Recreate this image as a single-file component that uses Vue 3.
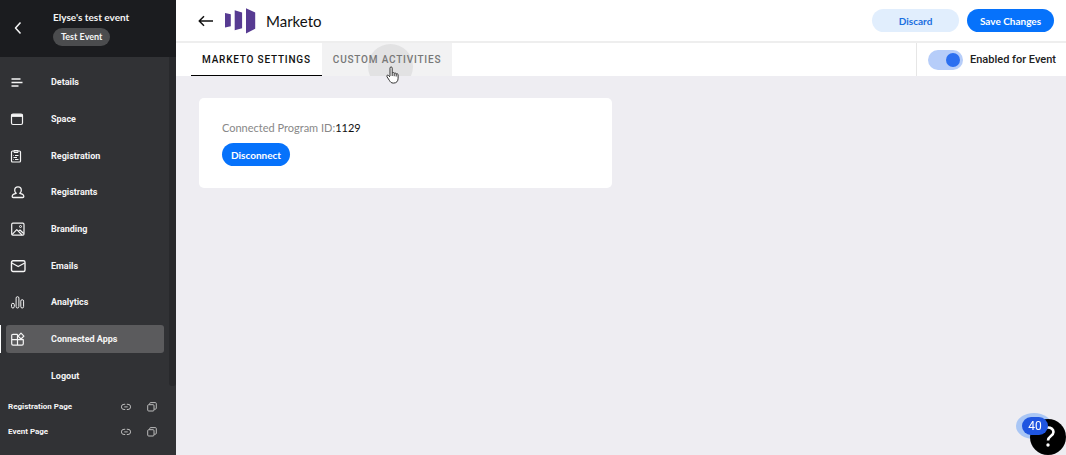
<script setup>
import { ref } from 'vue'

const items = [
  { name: 'Details', icon: 'details' },
  { name: 'Space', icon: 'space' },
  { name: 'Registration', icon: 'registration' },
  { name: 'Registrants', icon: 'registrants' },
  { name: 'Branding', icon: 'branding' },
  { name: 'Emails', icon: 'emails' },
  { name: 'Analytics', icon: 'analytics' },
  { name: 'Connected Apps', icon: 'apps' },
  { name: 'Logout', icon: '' },
]
const pages = ['Registration Page', 'Event Page']
const current = ref('Connected Apps')
const enabled = ref(true)
</script>

<template>
  <div class="layout">
    <aside class="sidebar">
      <header class="event">
        <button class="plain back" type="button" aria-label="Back to events">
          <svg width="8" height="14" viewBox="0 0 8 14"><path d="M6.5 1.5 1.5 7l5 5.5" stroke-width="1.5" /></svg>
        </button>
        <div class="event-info">
          <h2>Elyse's test event</h2>
          <span class="badge">Test Event</span>
        </div>
      </header>
      <div class="menu">
        <nav>
          <a
            v-for="item in items"
            :key="item.name"
            href="#"
            class="nav-item"
            :class="{ active: current === item.name }"
            @click.prevent="current = item.name"
          >
            <svg class="nav-icon" width="16" height="16" viewBox="0 0 16 16" aria-hidden="true">
              <path v-if="item.icon === 'details'" d="M1.500 5h9M1.500 8.500h11M1.500 12h7" stroke-width="1.300" />
              <template v-else-if="item.icon === 'space'">
                <rect x="1.500" y="3" width="11" height="10.500" rx="1.500" stroke-width="1.200" />
                <path d="M1.500 4.500h11" stroke-width="2.800" />
              </template>
              <template v-else-if="item.icon === 'registration'">
                <rect x="1.500" y="3" width="9" height="11" rx="1" stroke-width="1.200" />
                <path d="M4 2.500h4v2H4zM3.500 7.500h.5M5 7.500h3.500M3.500 9.500h3.500M3.500 11.500h.5M5 11.500h3.500" />
              </template>
              <template v-else-if="item.icon === 'registrants'">
                <path d="M4.700 6.200a3.300 3.300 0 0 1 6.600 0c0 1.500-.6 2.600-1.500 3.200 2.300.4 4 1.500 4 3.100 0 .7-.4 1-1 1H3.200c-.7 0-1-.4-1-1 0-1.600 1.700-2.700 4-3.100-.9-.6-1.500-1.700-1.500-3.200Z" stroke-width="1.300" />
              </template>
              <template v-else-if="item.icon === 'branding'">
                <rect x="1.700" y="2.200" width="12.300" height="12" rx="1.200" stroke-width="1.200" />
                <path d="m2 13.700 4.800-5 5.200 5.300M8.500 10.200 10 9l3.700 3.500" stroke-width="1.200" />
                <circle cx="10.500" cy="5.500" r="1" />
              </template>
              <template v-else-if="item.icon === 'emails'">
                <rect x="1.500" y="2.800" width="13.500" height="10.700" rx="1.500" stroke-width="1.400" />
                <path d="m1.800 5 6.400 3.500L14.700 5" stroke-width="1.300" />
              </template>
              <template v-else-if="item.icon === 'analytics'">
                <rect x="1.500" y="9.300" width="2.800" height="4.700" rx="1.400" />
                <rect x="6.100" y="2.700" width="2.800" height="11.300" rx="1.400" />
                <rect x="10.800" y="5.700" width="2.800" height="8.300" rx="1.400" />
              </template>
              <template v-else-if="item.icon === 'apps'">
                <path d="M7.500 3.300H3A1.300 1.300 0 0 0 1.700 4.600v8.200A1.300 1.300 0 0 0 3 14.100h9a1.300 1.300 0 0 0 1.300-1.300V8.700H1.700M7.500 3.300v10.800" stroke-width="1.200" />
                <path d="m11 2.200 2.900 2.900L11 8 8.100 5.100Z" stroke-width="1.200" />
              </template>
            </svg>
            <span>{{ item.name }}</span>
          </a>
        </nav>
        <div class="track"></div>
      </div>
      <ul class="pages">
        <li v-for="page in pages" :key="page">
          <span class="page-name">{{ page }}</span>
          <button class="plain" type="button" :aria-label="`Open ${page}`">
            <svg width="10" height="10" viewBox="0 0 10 10"><path d="M4.200 2.300H3a2.600 2.600 0 0 0 0 5.200h1.200M5.800 2.300H7a2.600 2.600 0 0 1 0 5.200H5.800M3.300 4.900h3.400" /></svg>
          </button>
          <button class="plain" type="button" :aria-label="`Copy ${page} link`">
            <svg width="10" height="10" viewBox="0 0 10 10"><rect x=".7" y="2.700" width="6.300" height="6.300" rx="1" /><path d="M2.700 2.500V1.600a1 1 0 0 1 1-1h4.600a1 1 0 0 1 1 1v4.600a1 1 0 0 1-1 1H7.200" /></svg>
          </button>
        </li>
      </ul>
    </aside>

    <main>
      <header class="topbar">
        <button class="plain return" type="button" aria-label="Back to apps">
          <svg width="16" height="12" viewBox="0 0 16 12"><path d="M15 6H1.300M6 1.200 1.200 6 6 10.800" stroke-width="1.500" /></svg>
        </button>
        <svg class="logo" width="31" height="26" viewBox="0 0 31 26" aria-hidden="true">
          <path d="m0 5 5.800 1.300v12L0 19.600ZM9.700 2.300l7.400 2.200v15.800l-7.400 2ZM21 .3l9.200 4.200v16.300L21 25.500Z" />
        </svg>
        <h1>Marketo</h1>
        <button class="pill soft" type="button">Discard</button>
        <button class="pill" type="button">Save Changes</button>
      </header>

      <div class="subbar">
        <div class="tabs" role="tablist">
          <button class="tab selected" type="button" role="tab" aria-selected="true">MARKETO SETTINGS</button>
          <button class="tab hovered" type="button" role="tab" aria-selected="false">
            <span class="ripple"></span>
            <span class="tab-label">CUSTOM ACTIVITIES</span>
          </button>
          <svg class="pointer" width="13" height="18" viewBox="0 0 13 18" aria-hidden="true">
            <path d="M4 10V2.200c0-1.800 2.200-1.800 2.200 0V7c.5-.8 1.900-.6 2 .4.600-.7 1.900-.4 2 .6.900-.6 1.900-.2 1.900.9v3.300c0 3-1.500 4.900-4.700 4.900-2.300 0-3.200-1.300-4.100-2.800L1 10.800C.3 9.500 1.600 8.500 2.600 9.500L4 11M6.200 7v3M8.200 7.500v2.700M10.200 8v2.500" />
          </svg>
        </div>
        <label class="toggle">
          <input v-model="enabled" type="checkbox" role="switch" />
          <span>Enabled for Event</span>
        </label>
      </div>

      <section class="content">
        <div class="card">
          <p>Connected Program ID:<b>1129</b></p>
          <button class="pill compact" type="button">Disconnect</button>
        </div>
      </section>
    </main>

    <button class="help" type="button" aria-label="Help, 40 notifications">
      <span class="halo"></span>
      <span class="disc">
        <svg width="14" height="22" viewBox="0 0 14 22" aria-hidden="true">
          <path d="M1.500 6C1.500 0 12.500 0 12.500 6c0 4-5.500 4-5.500 8.500" stroke-width="2.600" />
          <circle class="dot" cx="7" cy="19" r="1.700" />
        </svg>
      </span>
      <span class="count">40</span>
    </button>
  </div>
</template>

<style>
body {
  margin: 0;
}
</style>

<style scoped>
* {
  box-sizing: border-box;
}
.layout {
  display: flex;
  min-height: 100vh;
  font-family: Roboto, 'Liberation Sans', sans-serif;
  background: #eeedf2;
}
svg {
  display: block;
  flex: none;
  fill: none;
  stroke: currentColor;
  stroke-linejoin: round;
}
button {
  font-family: inherit;
  border: 0;
  cursor: pointer;
}
.plain {
  padding: 0;
  color: inherit;
  background: none;
}
h1, h2, p, ul {
  margin: 0;
  padding: 0;
}

.sidebar {
  display: flex;
  flex-direction: column;
  flex: none;
  width: 176px;
  color: #f5f5f5;
  background: #313235;
}
.event {
  display: flex;
  align-items: flex-start;
  height: 57px;
  padding: 10px 0 0 14px;
  background: #1b1c1f;
}
.back {
  width: 39px;
  margin-top: 11px;
}
.event-info {
  display: flex;
  flex-direction: column;
  align-items: flex-start;
  gap: 4px;
  font-family: Lato, sans-serif;
}
h2 {
  font-size: 10px;
  line-height: 14px;
  font-weight: 700;
}
.badge {
  padding: 0 8px;
  border-radius: 9px;
  font-size: 9px;
  line-height: 18px;
  font-weight: 700;
  background: #4b4c4e;
}
.menu {
  display: flex;
  flex: 1;
}
nav {
  display: grid;
  grid-auto-rows: 1fr;
  align-items: center;
  flex: 1;
  padding-top: 7px;
}
.nav-item {
  display: flex;
  align-items: center;
  gap: 25px;
  position: relative;
  height: 28px;
  margin: 0 5px 0 6px;
  padding-left: 4px;
  border-radius: 3px;
  font-size: 9px;
  font-weight: 700;
  color: inherit;
  text-decoration: none;
}
.nav-item.active {
  background: #5b5b5d;
}
.nav-item.active::before {
  content: '';
  position: absolute;
  left: -6px;
  width: 1px;
  height: 28px;
  background: #fff;
}
.track {
  width: 7px;
  margin-bottom: 8px;
  border-radius: 0 0 3px 3px;
  background: #28292c;
}
.pages {
  height: 61px;
  list-style: none;
}
.pages li {
  display: flex;
  align-items: center;
  gap: 16px;
  height: 25px;
  padding: 0 19px 0 8px;
  font-size: 8px;
  font-weight: 700;
}
.page-name {
  flex: 1;
}
.pages button {
  color: #bbb;
}

main {
  display: flex;
  flex-direction: column;
  flex: 1;
  min-width: 0;
}
.topbar {
  display: flex;
  align-items: center;
  height: 43px;
  padding: 0 12px 0 22px;
  border-bottom: 2px solid #eee;
  color: #111;
  background: #fff;
}
.logo {
  margin: 0 10px 0 11px;
  fill: #573b92;
  stroke: none;
}
h1 {
  flex: 1;
  font-family: Lato, sans-serif;
  font-size: 15px;
  line-height: 20px;
  font-weight: 400;
}
.pill {
  min-width: 87px;
  height: 23px;
  padding: 0 9px;
  border-radius: 12px;
  font-family: Lato, sans-serif;
  font-size: 10px;
  font-weight: 700;
  color: #fff;
  background: #0672fb;
}
.pill.soft {
  margin-right: 8px;
  color: #1b6fe0;
  background: #e1eefd;
}
.pill.compact {
  min-width: 0;
}
.subbar {
  display: flex;
  justify-content: space-between;
  height: 33px;
  padding-left: 15px;
  background: #fff;
}
.tabs {
  display: flex;
  position: relative;
}
.tab {
  position: relative;
  overflow: hidden;
  padding: 0 11px;
  font-size: 10px;
  font-weight: 500;
  letter-spacing: 0.08em;
  white-space: nowrap;
  color: #111;
  background: none;
}
.tab.selected {
  box-shadow: inset 0 -1px 0 #000;
}
.tab.hovered {
  color: #777;
  background: #f2f2f3;
}
.tab-label {
  position: relative;
}
.ripple {
  position: absolute;
  left: 46px;
  top: 1px;
  width: 45px;
  height: 45px;
  border-radius: 50%;
  background: #e2e2e3;
}
.pointer {
  position: absolute;
  left: 195px;
  top: 23px;
  z-index: 1;
  fill: #fff;
  color: #333;
}
.toggle {
  display: flex;
  align-items: center;
  gap: 7px;
  padding: 0 10px 0 11px;
  border-left: 1px solid #e6e6e6;
  font-size: 11px;
  font-weight: 500;
  color: #222;
}
.toggle input {
  appearance: none;
  display: flex;
  align-items: center;
  width: 35px;
  height: 20px;
  margin: 0;
  padding: 0 3px;
  border-radius: 10px;
  background: #ccc;
}
.toggle input::before {
  content: '';
  width: 14px;
  height: 14px;
  border-radius: 50%;
  background: #fff;
}
.toggle input:checked {
  justify-content: flex-end;
  background: #b6cdf9;
}
.toggle input:checked::before {
  background: #2b6ff0;
}
.content {
  flex: 1;
  padding: 22px 23px;
}
.card {
  max-width: 413px;
  padding: 22px 23px;
  border-radius: 5px;
  background: #fff;
}
.card p {
  margin-bottom: 8px;
  font-family: Lato, sans-serif;
  font-size: 11px;
  line-height: 15px;
  color: #888;
}
.card b {
  font-weight: 400;
  color: #111;
}
.help {
  position: fixed;
  right: 0;
  bottom: 0;
  padding: 0;
  color: #fff;
  background: none;
}
.disc {
  display: flex;
  align-items: center;
  justify-content: center;
  position: relative;
  width: 36px;
  height: 36px;
  border-radius: 50%;
  background: #000;
}
.dot {
  fill: #fff;
  stroke: none;
}
.halo {
  position: absolute;
  right: 14px;
  top: -6px;
  width: 36px;
  height: 26px;
  border-radius: 50%;
  background: #a9c6f5;
}
.count {
  position: absolute;
  right: 18px;
  top: -2px;
  width: 26px;
  border-radius: 9px;
  font-size: 12px;
  line-height: 18px;
  color: #fff;
  background: #1f55e0;
}
</style>
